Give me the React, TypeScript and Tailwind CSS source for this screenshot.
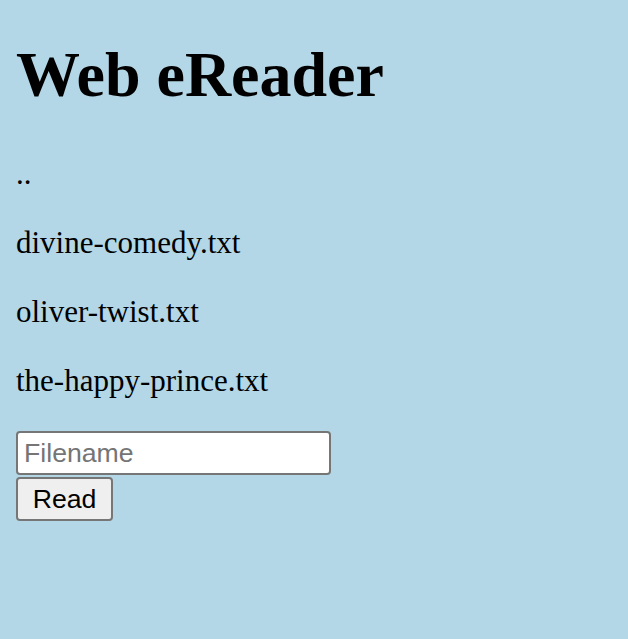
import React, { useState } from "react";

const files = ["..", "divine-comedy.txt", "oliver-twist.txt", "the-happy-prince.txt"];

export default function App() {
  const [name, setName] = useState("");

  return (
    <div className="min-h-screen bg-[#b3d7e6] px-4 pt-[38px] font-['Liberation_Serif','Times_New_Roman',serif] text-black">
      <h1 className="m-0 mb-[43px] text-[64px] font-bold leading-[normal]">Web eReader</h1>
      {files.map((f) => (
        <p key={f} className="my-8 text-[31px] leading-[37px]">
          {f}
        </p>
      ))}
      <form className="flex flex-col items-start gap-[2px] font-['Liberation_Sans',Arial,sans-serif]" onSubmit={(e) => e.preventDefault()}>
        <input
          type="text"
          placeholder="Filename"
          value={name}
          onChange={(e) => setName(e.target.value)}
          className="h-[44px] w-[315px] rounded-[4px] border-2 border-[#767676] bg-white px-[6px] text-[26.67px] text-black placeholder:text-[#757575] focus:outline-none"
        />
        <button
          type="submit"
          className="h-[44px] w-[97px] rounded-[4px] border-2 border-[#767676] bg-[#efefef] text-[26.67px] text-black"
        >
          Read
        </button>
      </form>
    </div>
  );
}
